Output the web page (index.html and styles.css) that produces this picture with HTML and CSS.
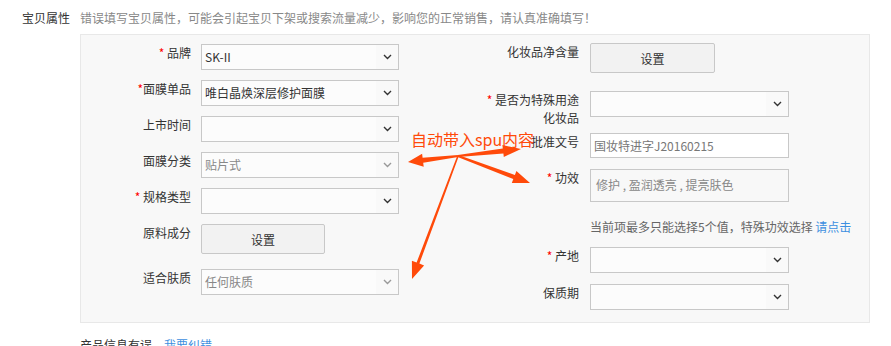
FILE: index.html
```html
<!DOCTYPE html>
<html lang="zh-CN">
<head>
    <meta charset="UTF-8">
    <title>宝贝属性</title>
    <link rel="stylesheet" href="styles.css">
</head>
<body>
    <div class="page">
        <div class="prop-title">宝贝属性</div>
        <div class="prop-body">
            <p class="prop-tip">错误填写宝贝属性，可能会引起宝贝下架或搜索流量减少，影响您的正常销售，请认真准确填写！</p>

            <div class="panel">
                <div class="col col-left">
                    <div class="field">
                        <label class="field-label"><span class="star">*</span> 品牌</label>
                        <div class="select"><span class="select-text">SK-II</span><span class="select-arrow"><svg width="9" height="6" viewBox="0 0 9 6"><path d="M1 1 L4.5 4.5 L8 1" fill="none" stroke="#333" stroke-width="1.4"/></svg></span></div>
                    </div>
                    <div class="field">
                        <label class="field-label"><span class="star">*</span>面膜单品</label>
                        <div class="select"><span class="select-text">唯白晶焕深层修护面膜</span><span class="select-arrow"><svg width="9" height="6" viewBox="0 0 9 6"><path d="M1 1 L4.5 4.5 L8 1" fill="none" stroke="#333" stroke-width="1.4"/></svg></span></div>
                    </div>
                    <div class="field">
                        <label class="field-label">上市时间</label>
                        <div class="select"><span class="select-text"></span><span class="select-arrow"><svg width="9" height="6" viewBox="0 0 9 6"><path d="M1 1 L4.5 4.5 L8 1" fill="none" stroke="#333" stroke-width="1.4"/></svg></span></div>
                    </div>
                    <div class="field">
                        <label class="field-label">面膜分类</label>
                        <div class="select disabled"><span class="select-text">贴片式</span><span class="select-arrow"><svg width="9" height="6" viewBox="0 0 9 6"><path d="M1 1 L4.5 4.5 L8 1" fill="none" stroke="#999" stroke-width="1.4"/></svg></span></div>
                    </div>
                    <div class="field">
                        <label class="field-label"><span class="star">*</span> 规格类型</label>
                        <div class="select"><span class="select-text"></span><span class="select-arrow"><svg width="9" height="6" viewBox="0 0 9 6"><path d="M1 1 L4.5 4.5 L8 1" fill="none" stroke="#333" stroke-width="1.4"/></svg></span></div>
                    </div>
                    <div class="field">
                        <label class="field-label">原料成分</label>
                        <button class="btn">设置</button>
                    </div>
                    <div class="field field-gap">
                        <label class="field-label">适合肤质</label>
                        <div class="select disabled"><span class="select-text">任何肤质</span><span class="select-arrow"><svg width="9" height="6" viewBox="0 0 9 6"><path d="M1 1 L4.5 4.5 L8 1" fill="none" stroke="#999" stroke-width="1.4"/></svg></span></div>
                    </div>
                </div>

                <div class="col col-right">
                    <div class="field">
                        <label class="field-label">化妆品净含量</label>
                        <button class="btn">设置</button>
                    </div>
                    <div class="field r-special">
                        <label class="field-label"><span class="star">*</span> 是否为特殊用途化妆品</label>
                        <div class="select"><span class="select-text"></span><span class="select-arrow"><svg width="9" height="6" viewBox="0 0 9 6"><path d="M1 1 L4.5 4.5 L8 1" fill="none" stroke="#333" stroke-width="1.4"/></svg></span></div>
                    </div>
                    <div class="field r-number">
                        <label class="field-label">批准文号</label>
                        <div class="input">国妆特进字J20160215</div>
                    </div>
                    <div class="field r-effect">
                        <label class="field-label"><span class="star">*</span> 功效</label>
                        <div class="textarea">修护 , 盈润透亮 , 提亮肤色</div>
                    </div>
                    <p class="hint">当前项最多只能选择5个值，特殊功效选择 <a href="#">请点击</a></p>
                    <div class="field r-origin">
                        <label class="field-label"><span class="star">*</span> 产地</label>
                        <div class="select"><span class="select-text"></span><span class="select-arrow"><svg width="9" height="6" viewBox="0 0 9 6"><path d="M1 1 L4.5 4.5 L8 1" fill="none" stroke="#333" stroke-width="1.4"/></svg></span></div>
                    </div>
                    <div class="field r-origin">
                        <label class="field-label">保质期</label>
                        <div class="select"><span class="select-text"></span><span class="select-arrow"><svg width="9" height="6" viewBox="0 0 9 6"><path d="M1 1 L4.5 4.5 L8 1" fill="none" stroke="#333" stroke-width="1.4"/></svg></span></div>
                    </div>
                </div>
            </div>

            <p class="report">产品信息有误，<a href="#">我要纠错</a></p>
        </div>
    </div>

    <!-- annotation over the form -->
    <div class="note">自动带入spu内容</div>
    <svg class="note-arrows" width="891" height="346" viewBox="0 0 891 346">
        <g fill="#ff4a0a">
            <polygon points="457.9,155 422.6,157.7 422.1,153.7 408,162 423.7,166.7 423.2,162.7 458.1,157"/>
            <polygon points="457.9,155 502.8,148.5 502.4,145 521,149 503.8,157 503.4,153.5 458.1,157"/>
            <polygon points="458.35,155.1 514.9,174.9 516.4,170.9 530,183 511.8,183.1 513.3,179.1 457.65,156.9"/>
            <polygon points="458.75,156.3 419.4,263.6 424.1,265.4 412,279 411.9,260.8 416.6,262.6 457.25,155.7"/>
        </g>
    </svg>
</body>
</html>
```

FILE: styles.css
```css
body {
    margin: 0;
    font-family: "Noto Sans CJK SC", "Liberation Sans", sans-serif;
    font-size: 12px;
    line-height: 18px;
    color: #333;
    background-color: #fff;
}
.page {
    display: flex;
    padding: 9px 0 0 22px;
}
.prop-title {
    width: 58px;
}
.prop-body {
    width: 790px;
}
.prop-tip {
    margin: 0 0 7px;
    color: #888;
}
.panel {
    display: flex;
    background-color: #f8f8f8;
    border: 1px solid #e8e8e8;
    padding: 8px 0 12px;
}
.col-left {
    width: 392px;
    padding: 1px 0 0 10px;
}
.col-left .field-label {
    width: 100px;
    margin-right: 10px;
}
.col-right .field-label {
    width: 96px;
    margin-right: 11px;
}
.field {
    display: flex;
    align-items: flex-start;
    margin-bottom: 10px;
}
.field-gap {
    margin-top: 15px;
}
.field-label {
    text-align: right;
    flex-shrink: 0;
}
.star {
    color: #f00;
}
.select {
    display: flex;
    width: 198px;
    height: 26px;
    box-sizing: border-box;
    border: 1px solid #c8c8c8;
    background-color: #fcfcfc;
}
.col-right .select,
.col-right .input,
.col-right .textarea {
    width: 199px;
}
.select-text {
    flex: 1;
    padding-left: 3px;
    line-height: 24px;
    color: #333;
}
.select.disabled .select-text {
    color: #888;
}
.select-arrow {
    width: 22px;
    display: flex;
    align-items: center;
    justify-content: center;
    background-color: #f9f9f9;
}
.btn {
    width: 124px;
    height: 30px;
    border: 1px solid #c8c8c8;
    border-radius: 2px;
    background-color: #f2f2f2;
    font-family: inherit;
    font-size: 12px;
    color: #333;
}
.col-right .btn {
    width: 125px;
}
.r-special {
    margin-top: 18px;
    margin-bottom: 6px;
}
.r-number {
    margin-bottom: 11px;
}
.input {
    height: 25px;
    box-sizing: border-box;
    border: 1px solid #c8c8c8;
    background-color: #fff;
    padding-left: 3px;
    line-height: 23px;
    color: #777;
}
.textarea {
    height: 33px;
    box-sizing: border-box;
    border: 1px solid #c8c8c8;
    background-color: #f8f8f8;
    padding: 6px 0 0 5px;
    color: #888;
}
.r-effect {
    margin-bottom: 16px;
}
.hint {
    margin: 0 0 11px 107px;
    color: #666;
}
.hint a,
.report a {
    color: #3d8fe0;
    text-decoration: none;
}
.r-origin {
    margin-bottom: 11px;
}
.r-origin:last-child {
    margin-bottom: 0;
}
.report {
    margin: 13px 0 0;
}
.note {
    position: absolute;
    left: 411px;
    top: 129px;
    font-size: 16px;
    line-height: 20px;
    color: #ff4a0a;
}
.note-arrows {
    position: absolute;
    left: 0;
    top: 0;
    pointer-events: none;
}
```
